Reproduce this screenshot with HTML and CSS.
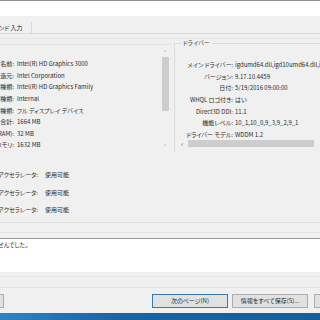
FILE: index.html
```html
<!DOCTYPE html>
<html lang="ja">
<head>
<meta charset="utf-8">
<link rel="stylesheet" href="styles.css">
</head>
<body>
<div class="topline"></div>
<div class="title"></div>
<div class="tabs"><div class="tab">サウンド 入力</div></div>
<div class="band"></div>
<div class="upper">
  <div class="device">
    <div class="list">
      <div class="lab">名前:</div><div class="val">Intel(R) HD Graphics 3000</div>
      <div class="lab">製造元:</div><div class="val">Intel Corporation</div>
      <div class="lab">チップの種類:</div><div class="val">Intel(R) HD Graphics Family</div>
      <div class="lab">DAC の種類:</div><div class="val">Internal</div>
      <div class="lab">デバイスの種類:</div><div class="val">フル ディスプレイ デバイス</div>
      <div class="lab">メモリ合計:</div><div class="val">1664 MB</div>
      <div class="lab">表示メモリ (VRAM):</div><div class="val">32 MB</div>
      <div class="lab">共有メモリ:</div><div class="val">1632 MB</div>
    </div>
    <div class="vscroll">
      <div class="arrow">&#x2C4;</div>
      <div class="thumb"></div>
      <div class="track"></div>
      <div class="arrow">&#x2C5;</div>
    </div>
  </div>
  <fieldset class="driver">
    <legend>ドライバー</legend>
    <div class="dlist">
      <div class="lab">メイン ドライバー:</div><div class="val">igdumd64.dll,igd10umd64.dll,igd10umd64.dll</div>
      <div class="lab">バージョン:</div><div class="val">9.17.10.4459</div>
      <div class="lab">日付:</div><div class="val">5/19/2016 09:00:00</div>
      <div class="lab">WHQL ロゴ付き:</div><div class="val">はい</div>
      <div class="lab">Direct3D DDI:</div><div class="val">11.1</div>
      <div class="lab">機能レベル:</div><div class="val">10_1,10_0,9_3,9_2,9_1</div>
      <div class="lab">ドライバー モデル:</div><div class="val">WDDM 1.2</div>
    </div>
    <div class="hscroll"><span class="harrow">&lsaquo;</span><span class="hthumb"></span></div>
  </fieldset>
</div>
<div class="features">
  <div class="lab">DirectDraw アクセラレータ:</div><div class="val">使用可能</div>
  <div class="lab">Direct3D アクセラレータ:</div><div class="val">使用可能</div>
  <div class="lab">AGP テクスチャ アクセラレータ:</div><div class="val">使用可能</div>
</div>
<div class="sep sep1"></div>
<div class="sep sep2"></div>
<div class="notes"><div class="note">問題は見つかりませんでした。</div></div>
<div class="footer">
  <div class="fline1"></div>
  <div class="fline2"></div>
  <div class="buttons">
    <div class="btn partial"></div>
    <div class="spacer"></div>
    <div class="btn default">次のページ(N)</div>
    <div class="btn save">情報をすべて保存(S)...</div>
    <div class="btn last"></div>
  </div>
</div>
<div class="taskbar"></div>
</body>
</html>
```

FILE: styles.css
```css
html, body {
  margin: 0;
  padding: 0;
}
body {
  width: 320px;
  height: 320px;
  overflow: hidden;
  background: #f0f0f0;
  font-family: "Noto Sans CJK JP", "Noto Sans", sans-serif;
  font-size: 6px;
  font-feature-settings: "palt" 1;
  color: #2b2b2b;
}
.topline {
  height: 1px;
  background: #8e8e8e;
}
.title {
  height: 15px;
  background: #ffffff;
}
.tabs {
  height: 17px;
  display: flex;
  align-items: flex-end;
  border-bottom: 1px solid #d9d9d9;
  overflow: hidden;
}
.tab {
  height: 11px;
  line-height: 11px;
  margin-left: -12px;
  padding-right: 8px;
  border-right: 1px solid #d9d9d9;
  white-space: nowrap;
}
.band {
  height: 4px;
  border-bottom: 1px solid #e4e4e4;
}
.upper {
  margin-top: 5px;
  height: 108px;
  display: flex;
}
.device {
  width: 172px;
  border-top: 1px solid #e2e2e2;
  display: flex;
  overflow: hidden;
}
.list {
  flex: 1;
  overflow: hidden;
  display: grid;
  grid-template-columns: 80px 1fr;
  grid-auto-rows: 11.57px;
  column-gap: 3px;
  margin-left: -66px;
  padding-top: 13px;
  align-content: start;
  align-items: center;
  white-space: nowrap;
}
.lab {
  text-align: right;
  white-space: nowrap;
}
.val {
  white-space: nowrap;
}
.vscroll {
  width: 10px;
  margin: 4px 2px 0 0;
  height: 102px;
  display: flex;
  flex-direction: column;
  align-items: center;
}
.arrow {
  height: 8px;
  line-height: 8px;
  font-size: 7px;
  color: #606060;
}
.thumb {
  width: 7px;
  height: 54px;
  background: #cdcdcd;
}
.track {
  flex: 1;
}
.driver {
  flex: 1;
  margin: -5px 0 0 2px;
  padding: 0;
  min-width: 0;
  border: 1px solid #dcdcdc;
  border-right: none;
  border-bottom: none;
  overflow: hidden;
}
.driver legend {
  margin-left: 6px;
  padding: 0 2px;
  line-height: 8px;
  color: #444;
}
.dlist {
  display: grid;
  grid-template-columns: 58px 1fr;
  grid-auto-rows: 11.57px;
  column-gap: 2px;
  padding-top: 12px;
  align-items: center;
  white-space: nowrap;
}
.hscroll {
  display: flex;
  align-items: center;
  height: 7px;
  margin: 0 0 0 6px;
}
.harrow {
  width: 7px;
  font-size: 8px;
  line-height: 7px;
  color: #606060;
}
.hthumb {
  flex: 1;
  height: 7px;
  background: #cdcdcd;
  margin-right: 6px;
}
.features {
  display: grid;
  grid-template-columns: 100px 1fr;
  grid-auto-rows: 17.5px;
  column-gap: 7px;
  margin-left: -62px;
  padding-top: 14px;
  align-items: center;
  white-space: nowrap;
}
.sep {
  border-bottom: 1px solid #e2e2e2;
}
.sep1 {
  height: 3px;
}
.sep2 {
  height: 9px;
}
.notes {
  margin-top: 5px;
  height: 33px;
  background: #ffffff;
  border-top: 1px solid #9a9a9a;
  overflow: hidden;
}
.note {
  margin-left: -48px;
  line-height: 12px;
  white-space: nowrap;
}
.footer {
  height: 41px;
  display: flex;
  flex-direction: column;
}
.fline1 {
  height: 4px;
  border-bottom: 1px solid #e6e6e6;
}
.fline2 {
  height: 10px;
  border-bottom: 1px solid #e2e2e2;
}
.buttons {
  margin-top: 6px;
  height: 14px;
  display: flex;
}
.btn {
  box-sizing: border-box;
  height: 14px;
  line-height: 12px;
  text-align: center;
  background: #e1e1e1;
  border: 1px solid #adadad;
  white-space: nowrap;
}
.partial {
  width: 5px;
  margin-left: -1px;
  border-left: none;
}
.spacer {
  flex: 1;
}
.default {
  width: 76px;
  border-color: #3a78ad;
}
.save {
  width: 76px;
  margin-left: 4px;
}
.last {
  width: 6px;
  margin-left: 6px;
  border-right: none;
}
.taskbar {
  height: 7px;
  background: linear-gradient(to right, #2f82c4, #1763a3 40%, #155f9e);
}
```
